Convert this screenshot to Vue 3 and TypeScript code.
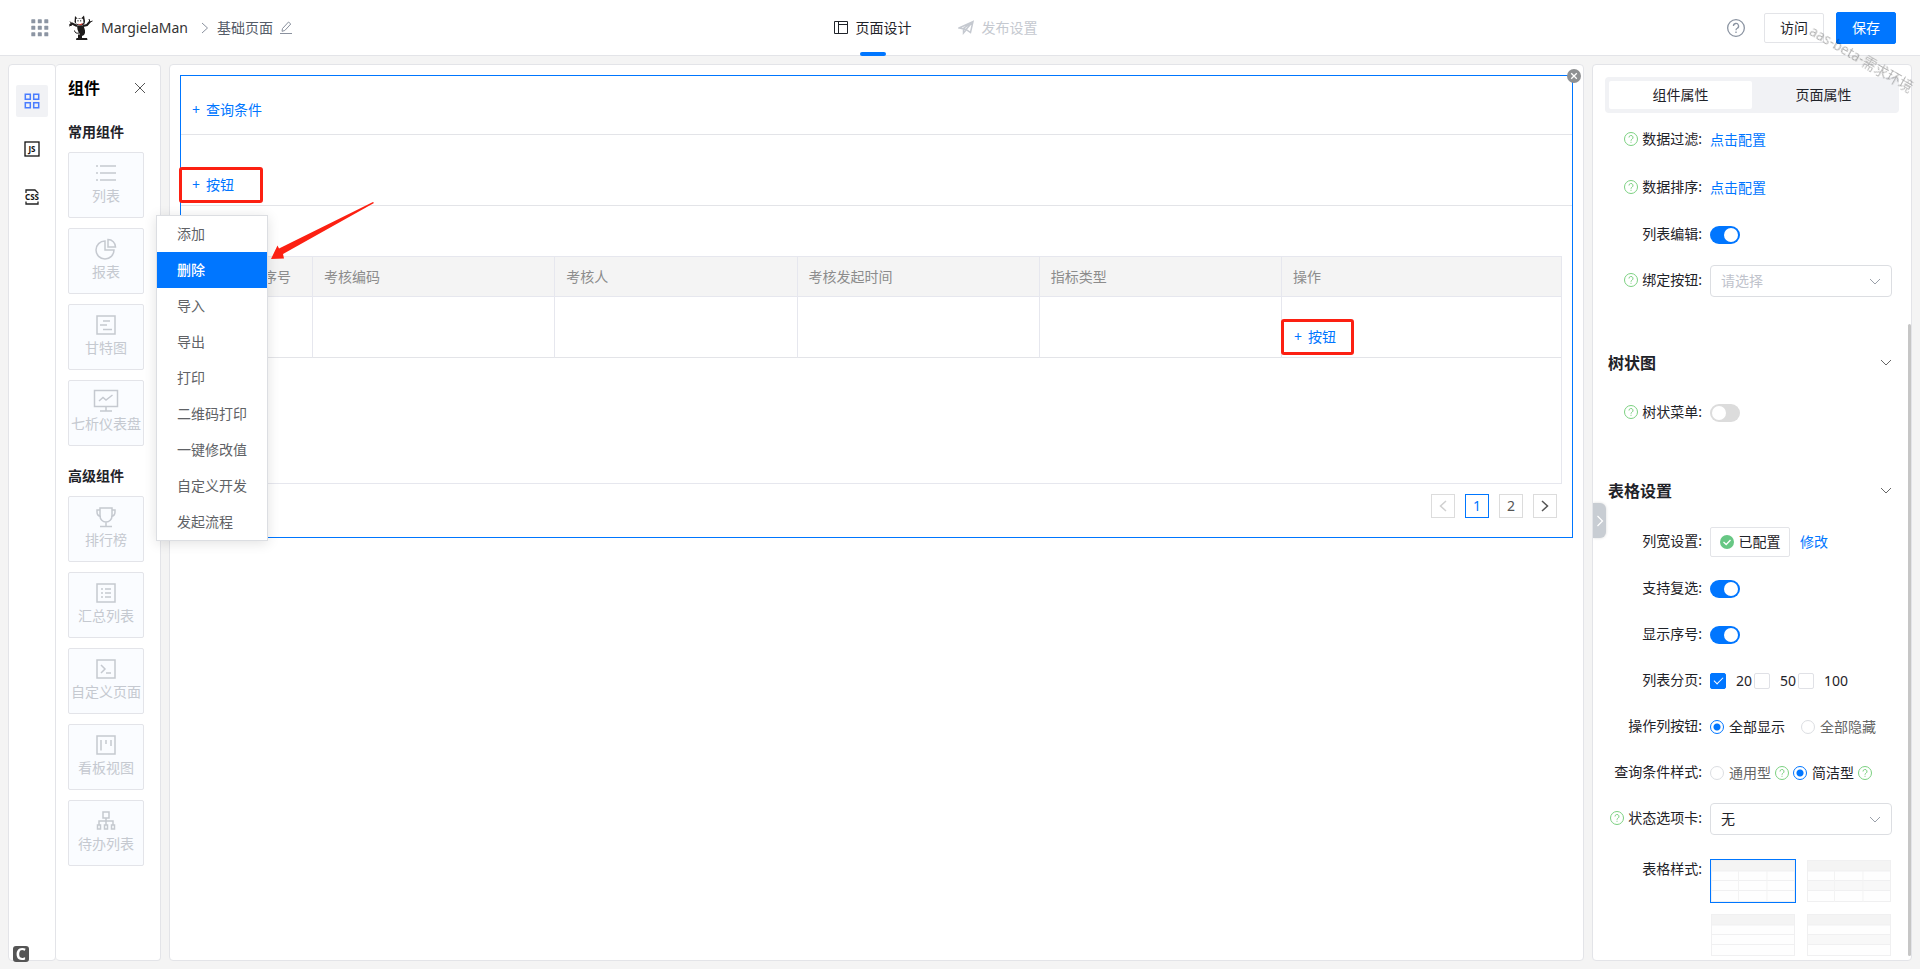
<script setup lang="ts">
import { ref } from 'vue'

interface Tile {
  label: string
  icon: string
}

const frame = 'M4 3h18v18H4z'

const commonTiles: Tile[] = [
  { label: '列表', icon: 'M3 5h2M7 5h16M3 12h2M7 12h16M3 19h2M7 19h16' },
  { label: '报表', icon: 'M12 4a9 9 0 1 0 9 9h-9zM15 2.5a7.5 7.5 0 0 1 7.5 7.5H15z' },
  { label: '甘特图', icon: frame + 'M10 8h7M7 12h7M10 16.5h9' },
  { label: '七析仪表盘', icon: 'M1.5 1.5h23v16h-23zM13 18v4M7 22h12M6 12l4-3.500 3 2.500 6.500-5' },
]

const advancedTiles: Tile[] = [
  { label: '排行榜', icon: 'M7 3h12v8a6 6 0 0 1-12 0zM7 5H4v2q0 4 4 4.500M19 5h3v2q0 4-4 4.500M13 17v4M7 21.500h12' },
  { label: '汇总列表', icon: frame + 'M8 8h2M12 8h6M8 12h2M12 12h6M8 16h2M12 16h6' },
  { label: '自定义页面', icon: frame + 'M8 8l4 4-4 4M13 16h5' },
  { label: '看板视图', icon: frame + 'M8 7v10.500M13 7v4M18 7v6' },
  { label: '待办列表', icon: 'M10 3h6v6h-6zM13 9v7M6 16v-4h14v4M4.500 16h3v4h-3zM11.500 16h3v4h-3zM18.500 16h3v4h-3z' },
]

const groups = [
  { title: '常用组件', tiles: commonTiles },
  { title: '高级组件', tiles: advancedTiles },
]

const menu = ['添加', '删除', '导入', '导出', '打印', '二维码打印', '一键修改值', '自定义开发', '发起流程']
const activeMenu = ref('删除')
const columns = ['考核编码', '考核人', '考核发起时间', '指标类型']

const listEdit = ref(true)
const treeMenu = ref(false)
const multiSelect = ref(true)
const showIndex = ref(true)
const pageSizes = ref<number[]>([20])
const opButtons = ref('show')
const queryStyle = ref('simple')
const boundButton = ref('')
const statusTab = ref('none')
const tableStyle = ref(0)
const thumbs = [
  { grid: true, stripe: false },
  { grid: true, stripe: true },
  { grid: false, stripe: false },
  { grid: false, stripe: true },
]
</script>

<template>
  <div class="app">
    <svg class="defs" aria-hidden="true">
      <symbol id="help" viewBox="0 0 14 14">
        <circle cx="7" cy="7" r="6.500" fill="none" stroke="currentColor" />
        <path d="M5 5.500a2 2 0 1 1 3 1.700q-1 .5-1 1.500M7 9.800v1" fill="none" stroke="currentColor" />
      </symbol>
      <symbol id="down" viewBox="0 0 12 8">
        <path d="M1 1l5 5 5-5" fill="none" stroke="currentColor" />
      </symbol>
    </svg>

    <header class="header">
      <div class="brand">
        <button class="bare apps" aria-label="应用">
          <svg width="18" height="18" viewBox="0 0 18 18" fill="#8c95a3">
            <template v-for="r in 3" :key="r">
              <rect v-for="c in 3" :key="c" :x="(c - 1) * 6.5 + 0.3" :y="(r - 1) * 6.5 + 0.3" width="4" height="4" rx="0.6" />
            </template>
          </svg>
        </button>
        <svg class="mascot" width="24" height="26" viewBox="0 0 24 26">
          <path d="M6 1l2.500 2.500 4-.5L15 .5l1 5.500q0 4-3.500 4.500L8 10 5.500 7z" fill="#1d1b1b" />
          <path d="M7 4q2-1.500 3.200 0 2.300-1.500 4 .5l.3 3.500q-3.500 2.500-7.500.5z" fill="#fff" />
          <path d="M8.500 8.500q3 1.500 5-.5l-.5 2q-2.500 1-4.500-1.500z" fill="#d8392f" />
          <path d="M9 5v1.500M11.700 5v1.500" stroke="#111" stroke-width=".8" />
          <path d="M8 11L3 8.500 1 10M14 11l4-1 3-3.500" fill="none" stroke="#1d1b1b" stroke-width="2" />
          <path d="M1 6.500l2 2.500-2.500.5M20 4l1 3 2.500-1M0 11l3-1" fill="none" stroke="#1d1b1b" />
          <path d="M8 10.500h6.500l1.500 5q.5 3-1 4.500l-2 1v2h5l.5 2H7l.5-2H9v-3.500h2q-2-3-2.500-5z" fill="#1d1b1b" />
          <path d="M10 18q-4 1-4.500-2.500" fill="none" stroke="#1d1b1b" />
        </svg>
        <span class="app-name">MargielaMan</span>
        <svg class="crumb" width="8" height="12" viewBox="0 0 8 12"><path d="M1 1l5.500 5L1 11" fill="none" stroke="#8a919e" /></svg>
        <span class="page-name">基础页面</span>
        <button class="bare edit" aria-label="编辑名称">
          <svg width="14" height="14" viewBox="0 0 14 14" fill="none" stroke="#8a919e"><path d="M3.500 7.500l6-6.500 2.300 2-6 6.500-2.800.8zM1 12.500h12" /></svg>
        </button>
      </div>
      <nav class="tabs">
        <a href="#design" class="tab on">
          <svg width="15" height="15" viewBox="0 0 15 15" fill="none" stroke="currentColor"><path d="M.5 1.500h13v12H.5zM4.500 1.500v12M4.500 4.500h9" /></svg>
          页面设计
        </a>
        <a href="#publish" class="tab">
          <svg width="17" height="15" viewBox="0 0 17 15" fill="none" stroke="currentColor" stroke-width="1.500"><path d="M1 8l14-6.500-2.500 11-4.500-3zM8 9.500L15 1.500 5.500 8.500v4.500l2.500-3" /></svg>
          发布设置
        </a>
      </nav>
      <div class="actions">
        <button class="bare help-top" aria-label="帮助"><svg width="18" height="18"><use href="#help" /></svg></button>
        <button class="btn">访问</button>
        <button class="btn primary">保存</button>
      </div>
    </header>

    <main class="workspace">
      <aside class="side">
        <div class="rail">
          <button class="rail-btn on" aria-label="组件">
            <svg width="16" height="16" viewBox="0 0 16 16" fill="none" stroke="#4a7dff" stroke-width="1.500"><path d="M1.300 1.300h5v5h-5zM9.700 1.300h5v5h-5zM1.300 9.700h5v5h-5zM9.700 9.700h5v5h-5z" /></svg>
          </button>
          <button class="rail-btn" aria-label="脚本">
            <svg width="16" height="16" viewBox="0 0 16 16"><rect x="1" y="1" width="14" height="14" fill="none" stroke="#111" stroke-width="1.300" /><text x="8" y="11" text-anchor="middle" class="glyph">JS</text></svg>
          </button>
          <button class="rail-btn" aria-label="样式">
            <svg width="16" height="16" viewBox="0 0 16 16"><path d="M2 4V1h9l3 3v.5M2 12.500V15h12v-2.500" fill="none" stroke="#222" stroke-width="1.300" /><text x="8" y="11" text-anchor="middle" class="glyph">CSS</text></svg>
          </button>
        </div>
        <section class="palette">
          <div class="palette-head">
            <h2>组件</h2>
            <button class="bare close" aria-label="关闭"><svg width="12" height="12" viewBox="0 0 12 12"><path d="M1 1l10 10M11 1L1 11" stroke="#555" /></svg></button>
          </div>
          <div v-for="g in groups" :key="g.title" class="group">
            <h3>{{ g.title }}</h3>
            <div class="tiles">
              <button v-for="t in g.tiles" :key="t.label" class="tile">
                <svg width="26" height="24" viewBox="0 0 26 24" fill="none" stroke="currentColor" stroke-width="1.500"><path :d="t.icon" /></svg>
                <span>{{ t.label }}</span>
              </button>
            </div>
          </div>
        </section>
      </aside>

      <section class="canvas">
        <div class="block">
          <button class="bare remove" aria-label="移除">
            <svg width="14" height="14" viewBox="0 0 14 14"><circle cx="7" cy="7" r="7" fill="#8f9193" /><path d="M4.200 4.200l5.600 5.600M9.800 4.200L4.200 9.800" stroke="#fff" stroke-width="1.300" /></svg>
          </button>
          <div class="query-bar"><button class="bare add"><i>+</i>查询条件</button></div>
          <div class="button-bar">
            <div class="anchor">
              <button class="bare add"><i>+</i>按钮</button>
              <span class="mark"></span>
              <ul class="menu">
                <li v-for="m in menu" :key="m">
                  <button :class="{ on: m === activeMenu }" @click="activeMenu = m">{{ m }}</button>
                </li>
              </ul>
              <svg class="arrow" width="104" height="60" viewBox="0 0 104 60"><path d="M0 59L6.500 45.500l1.500 3L102 2l1 1L12 54l1 4.500z" fill="#fc2012" /></svg>
            </div>
          </div>
          <div class="table-wrap">
            <table>
              <colgroup>
                <col class="c-check" /><col class="c-index" /><col v-for="c in columns" :key="c" /><col class="c-op" />
              </colgroup>
              <thead>
                <tr><th class="plain"></th><th class="center">序号</th><th v-for="c in columns" :key="c">{{ c }}</th><th>操作</th></tr>
              </thead>
              <tbody>
                <tr>
                  <td class="plain"></td><td></td><td v-for="c in columns" :key="c"></td>
                  <td class="op"><div class="anchor"><button class="bare add"><i>+</i>按钮</button><span class="mark small"></span></div></td>
                </tr>
              </tbody>
            </table>
          </div>
          <nav class="pager">
            <button disabled aria-label="上一页"><svg width="8" height="12" viewBox="0 0 8 12"><path d="M7 1L1.500 6 7 11" fill="none" stroke="#d0d0d0" stroke-width="1.500" /></svg></button>
            <button class="on">1</button>
            <button>2</button>
            <button aria-label="下一页"><svg width="8" height="12" viewBox="0 0 8 12"><path d="M1 1l5.500 5L1 11" fill="none" stroke="#555" stroke-width="1.500" /></svg></button>
          </nav>
        </div>
      </section>

      <aside class="props">
        <button class="collapse" aria-label="收起"><svg width="8" height="12" viewBox="0 0 8 12"><path d="M1.500 1L6.500 6l-5 5" fill="none" stroke="#fff" stroke-width="1.200" /></svg></button>
        <div class="segment">
          <button class="on">组件属性</button>
          <button>页面属性</button>
        </div>
        <form class="form" @submit.prevent>
          <div class="row tall">
            <span class="label"><svg class="tip"><use href="#help" /></svg>数据过滤:</span>
            <a href="#filter">点击配置</a>
          </div>
          <div class="row tall">
            <span class="label"><svg class="tip"><use href="#help" /></svg>数据排序:</span>
            <a href="#sort">点击配置</a>
          </div>
          <div class="row">
            <label class="label" for="list-edit">列表编辑:</label>
            <input id="list-edit" v-model="listEdit" type="checkbox" class="switch" />
          </div>
          <div class="row section-end">
            <label class="label" for="bound"><svg class="tip"><use href="#help" /></svg>绑定按钮:</label>
            <div class="select">
              <select id="bound" v-model="boundButton" class="empty"><option value="">请选择</option></select>
              <svg><use href="#down" /></svg>
            </div>
          </div>

          <div class="heading"><h2>树状图</h2><svg><use href="#down" /></svg></div>
          <div class="row">
            <label class="label" for="tree"><svg class="tip"><use href="#help" /></svg>树状菜单:</label>
            <input id="tree" v-model="treeMenu" type="checkbox" class="switch" />
          </div>

          <div class="heading"><h2>表格设置</h2><svg><use href="#down" /></svg></div>
          <div class="row tall">
            <span class="label">列宽设置:</span>
            <button type="button" class="btn configured">
              <svg width="14" height="14" viewBox="0 0 14 14"><circle cx="7" cy="7" r="7" fill="#67c784" /><path d="M3.500 7l2.700 2.500L10.500 5" fill="none" stroke="#fff" stroke-width="1.300" /></svg>已配置
            </button>
            <a class="modify" href="#width">修改</a>
          </div>
          <div class="row">
            <label class="label" for="multi">支持复选:</label>
            <input id="multi" v-model="multiSelect" type="checkbox" class="switch" />
          </div>
          <div class="row">
            <label class="label" for="index">显示序号:</label>
            <input id="index" v-model="showIndex" type="checkbox" class="switch" />
          </div>
          <div class="row">
            <span class="label">列表分页:</span>
            <div class="checks">
              <label v-for="n in [20, 50, 100]" :key="n"><input v-model="pageSizes" type="checkbox" class="check" :value="n" />{{ n }}</label>
            </div>
          </div>
          <div class="row">
            <span class="label">操作列按钮:</span>
            <div class="radios wide">
              <label :class="{ on: opButtons === 'show' }"><input v-model="opButtons" type="radio" name="op" value="show" />全部显示</label>
              <label :class="{ on: opButtons === 'hide' }"><input v-model="opButtons" type="radio" name="op" value="hide" />全部隐藏</label>
            </div>
          </div>
          <div class="row">
            <span class="label">查询条件样式:</span>
            <div class="radios">
              <label :class="{ on: queryStyle === 'common' }"><input v-model="queryStyle" type="radio" name="query" value="common" />通用型</label>
              <svg class="tip"><use href="#help" /></svg>
              <label :class="{ on: queryStyle === 'simple' }"><input v-model="queryStyle" type="radio" name="query" value="simple" />简洁型</label>
              <svg class="tip"><use href="#help" /></svg>
            </div>
          </div>
          <div class="row">
            <label class="label" for="status"><svg class="tip"><use href="#help" /></svg>状态选项卡:</label>
            <div class="select">
              <select id="status" v-model="statusTab"><option value="none">无</option></select>
              <svg><use href="#down" /></svg>
            </div>
          </div>
          <div class="row top">
            <span class="label">表格样式:</span>
            <div class="thumbs">
              <button v-for="(t, i) in thumbs" :key="i" type="button" class="thumb" :class="{ on: tableStyle === i }" :aria-label="'样式' + (i + 1)" @click="tableStyle = i">
                <svg viewBox="0 0 84 42" preserveAspectRatio="none">
                  <rect width="84" height="42" fill="#fefefe" />
                  <rect width="84" height="11" fill="#f4f4f4" />
                  <rect v-if="t.stripe" y="21" width="84" height="10" fill="#f8f8f8" />
                  <path d="M0 .5h84M0 11h84M0 20.500h84M0 30.500h84M0 41.500h84M.5 0v42M83.500 0v42" stroke="#f0f0f1" fill="none" />
                  <path v-if="t.grid" d="M27.500 11v31M56 11v31" stroke="#f3f3f3" />
                </svg>
              </button>
            </div>
          </div>
        </form>
        <div class="scrollbar"></div>
      </aside>
    </main>

    <div class="badge">C</div>
    <div class="watermark">aas-beta-需求环境</div>
  </div>
</template>

<style>
body {
  background: #f4f4f4;
}
</style>

<style scoped>
* {
  box-sizing: border-box;
}
.app {
  display: flex;
  flex-direction: column;
  height: 100vh;
  overflow: hidden;
  background: #f4f4f4;
  font-family: 'Noto Sans', 'Noto Sans CJK SC', sans-serif;
  font-size: 14px;
  line-height: 20px;
  color: #1f2329;
}
button,
input,
select {
  font: inherit;
  margin: 0;
}
button {
  cursor: pointer;
  white-space: nowrap;
}
svg {
  display: block;
  flex: none;
}
h2,
h3,
ul {
  margin: 0;
  padding: 0;
  list-style: none;
}
a {
  color: #0076ff;
  text-decoration: none;
}
.defs {
  position: absolute;
  width: 0;
  height: 0;
}
.bare {
  display: flex;
  align-items: center;
  padding: 0;
  border: 0;
  background: none;
}
.header {
  display: flex;
  flex: none;
  height: 56px;
  background: #fff;
  border-bottom: 1px solid #e3e4e8;
}
.brand {
  display: flex;
  flex: 1;
  align-items: center;
  padding-left: 31px;
}
.mascot {
  margin: 0 8px 0 20px;
}
.app-name {
  color: #333;
}
.crumb {
  margin: 0 8px 0 13px;
}
.page-name {
  color: #555c68;
}
.edit {
  margin-left: 6px;
}
.tabs {
  display: flex;
  gap: 46px;
  padding-right: 56px;
}
.tab {
  position: relative;
  display: flex;
  align-items: center;
  gap: 7px;
  color: #c5c9d0;
}
.tab.on {
  color: #1f2329;
}
.tab.on::after {
  content: '';
  position: absolute;
  bottom: -1px;
  left: calc(50% - 13px);
  width: 26px;
  height: 4px;
  border-radius: 2px;
  background: #0076ff;
}
.actions {
  display: flex;
  flex: 1;
  align-items: center;
  justify-content: flex-end;
  gap: 12px;
  padding-right: 24px;
}
.help-top {
  margin-right: 7px;
  color: #8a93a1;
}
.btn {
  display: flex;
  align-items: center;
  justify-content: center;
  width: 60px;
  height: 30px;
  padding: 0;
  border: 1px solid #e3e4e8;
  border-radius: 2px;
  background: #fff;
  color: #1f2329;
}
.btn.primary {
  height: 32px;
  border-color: #0076ff;
  background: #0076ff;
  color: #fff;
}
.workspace {
  display: flex;
  flex: 1;
  gap: 8px;
  min-height: 0;
  padding: 8px;
}
.side {
  display: flex;
}
.rail,
.palette,
.canvas,
.props {
  background: #fff;
  border: 1px solid #e3e4e8;
  border-radius: 4px;
}
.rail {
  display: flex;
  flex-direction: column;
  gap: 16px;
  width: 48px;
  padding: 20px 7px;
}
.rail-btn {
  display: grid;
  place-items: center;
  height: 32px;
  padding: 0;
  border: 0;
  border-radius: 2px;
  background: none;
}
.rail-btn.on {
  background: #f1f2f5;
}
.glyph {
  font: bold 8px 'Noto Sans', sans-serif;
  fill: #111;
}
.palette {
  width: 105px;
  border-left: 0;
  padding: 11px 16px 0 12px;
}
.palette-head {
  display: flex;
  align-items: center;
  justify-content: space-between;
  height: 24px;
}
.close {
  margin-right: -2px;
}
h2 {
  font-size: 16px;
  line-height: 24px;
  font-weight: bold;
}
.palette h2 {
  color: #000;
}
h3 {
  font-size: 14px;
  line-height: 20px;
}
.group {
  padding-top: 22px;
}
.group + .group {
  padding-top: 20px;
}
.tiles {
  display: flex;
  flex-direction: column;
  gap: 10px;
  width: 76px;
  padding-top: 10px;
}
.tile {
  display: flex;
  flex-direction: column;
  align-items: center;
  gap: 1px;
  height: 66px;
  padding: 8px 0 0;
  border: 1px solid #e3e4e9;
  border-radius: 2px;
  background: #fafcff;
  color: #c5c9d0;
}
.canvas {
  flex: 1;
  min-width: 0;
  padding: 10px;
}
.block {
  position: relative;
  border: 1px solid #0076ff;
}
.remove {
  position: absolute;
  top: -7px;
  right: -9px;
}
.query-bar {
  padding: 24px 11px 14px;
  border-bottom: 1px solid #e3e4e8;
}
.button-bar {
  padding: 40px 11px 10px;
  border-bottom: 1px solid #e3e4e8;
}
.add {
  color: #0076ff;
}
.add i {
  width: 14px;
  text-align: left;
  font-style: normal;
}
.anchor {
  position: relative;
  width: max-content;
}
.mark {
  position: absolute;
  top: -8px;
  left: -13px;
  width: 84px;
  height: 36px;
  border: 3px solid #fc2012;
  border-radius: 3px;
  pointer-events: none;
}
.mark.small {
  width: 73px;
}
.menu {
  position: absolute;
  z-index: 5;
  top: 40px;
  left: -36px;
  width: 112px;
  border: 1px solid #dcdee2;
  background: #fff;
  box-shadow: 0 2px 12px rgba(0, 0, 0, 0.12);
}
.menu button {
  display: block;
  width: 100%;
  height: 36px;
  padding: 0 0 0 20px;
  border: 0;
  background: none;
  color: #606266;
  text-align: left;
}
.menu button.on {
  background: #0076ff;
  color: #fff;
  font-weight: 500;
}
.arrow {
  position: absolute;
  z-index: 6;
  top: 25px;
  left: 79px;
}
.table-wrap {
  min-height: 228px;
  margin: 50px 10px 0;
  border: 1px solid #e6e7ee;
}
table {
  width: 100%;
  table-layout: fixed;
  border-collapse: separate;
  border-spacing: 0;
}
.c-check {
  width: 50px;
}
.c-index {
  width: 71px;
}
.c-op {
  width: 279px;
}
th {
  height: 40px;
  padding: 0 11px;
  border-right: 1px solid #e6e7ee;
  border-bottom: 1px solid #e6e7ee;
  background: #f4f4f4;
  color: #8c8c8c;
  font-weight: normal;
  text-align: left;
}
th.center {
  text-align: center;
}
td {
  height: 61px;
  padding: 10px 12px 0;
  border-right: 1px solid #e6e7ee;
  border-bottom: 1px solid #e3e4e8;
}
.plain,
th:last-child,
td:last-child {
  border-right: 0;
}
td.op {
  padding-top: 20px;
}
.pager {
  display: flex;
  justify-content: flex-end;
  gap: 10px;
  padding: 10px 15px 19px;
}
.pager button {
  display: grid;
  place-items: center;
  width: 24px;
  height: 24px;
  padding: 0;
  border: 1px solid #dcdcdc;
  background: #fff;
  color: #555;
}
.pager button.on {
  border-color: #0076ff;
  color: #0076ff;
}
.props {
  position: relative;
  width: 320px;
  padding: 12px;
  overflow: hidden;
}
.collapse {
  position: absolute;
  top: 438px;
  left: 0;
  display: grid;
  place-items: center;
  width: 13px;
  height: 35px;
  padding: 0;
  border: 0;
  border-radius: 0 6px 6px 0;
  background: #c8cdd3;
  box-shadow: 0 0 3px rgba(0, 0, 0, 0.15);
}
.segment {
  display: grid;
  grid-template-columns: 1fr 1fr;
  height: 36px;
  padding: 4px;
  border-radius: 4px;
  background: #f1f2f5;
}
.segment button {
  padding: 0;
  border: 0;
  border-radius: 2px;
  background: none;
  color: #1f2329;
}
.segment button.on {
  background: #fff;
}
.form {
  display: flex;
  flex-direction: column;
  gap: 14px;
  padding: 10px 7px 0 3px;
}
.row {
  display: flex;
  flex: none;
  align-items: center;
  min-height: 32px;
}
.row.tall {
  min-height: 34px;
}
.row.section-end {
  margin-bottom: 4px;
}
.row.top {
  align-items: flex-start;
  padding-top: 10px;
}
.label {
  display: flex;
  flex: none;
  align-items: center;
  justify-content: flex-end;
  gap: 4px;
  width: 94px;
  margin-right: 8px;
  padding-bottom: 2px;
}
.tip {
  width: 14px;
  height: 14px;
  color: #7bd080;
}
.switch {
  position: relative;
  width: 30px;
  height: 18px;
  appearance: none;
  border-radius: 9px;
  background: #dcdcdc;
}
.switch::after {
  content: '';
  position: absolute;
  top: 2px;
  left: 2px;
  width: 14px;
  height: 14px;
  border-radius: 50%;
  background: #fff;
}
.switch:checked {
  background: #0076ff;
}
.switch:checked::after {
  left: 14px;
}
.select {
  position: relative;
  flex: 1;
}
.select select {
  width: 100%;
  height: 32px;
  padding: 0 30px 0 10px;
  appearance: none;
  border: 1px solid #dcdee2;
  border-radius: 4px;
  background: #fff;
  color: #1f2329;
}
.select select.empty {
  color: #bfc3cc;
}
.select svg {
  position: absolute;
  top: 13px;
  right: 11px;
  width: 12px;
  height: 8px;
  color: #9aa0aa;
  pointer-events: none;
}
.heading {
  display: flex;
  align-items: center;
  justify-content: space-between;
  padding: 36px 0 8px;
}
.heading svg {
  width: 12px;
  height: 8px;
  color: #666;
}
.configured {
  gap: 5px;
  width: 80px;
}
.modify {
  margin-left: 10px;
}
.checks,
.radios {
  display: flex;
  align-items: center;
}
.checks {
  gap: 2px;
}
.checks label {
  display: flex;
  align-items: center;
  gap: 10px;
}
.check {
  position: relative;
  width: 16px;
  height: 16px;
  appearance: none;
  border: 1px solid #e0e1e6;
  border-radius: 2px;
}
.check:checked {
  border-color: #0076ff;
  background: #0076ff;
}
.check:checked::after {
  content: '';
  position: absolute;
  top: 3px;
  left: 3px;
  width: 8px;
  height: 4px;
  border: solid #fff;
  border-width: 0 0 1px 1px;
  transform: rotate(-45deg);
}
.radios {
  gap: 4px;
}
.radios.wide {
  gap: 16px;
}
.radios label {
  display: flex;
  align-items: center;
  gap: 5px;
  color: #666;
}
.radios label.on {
  color: #1f2329;
}
.radios input {
  width: 14px;
  height: 14px;
  appearance: none;
  border: 1px solid #dcdee2;
  border-radius: 50%;
}
.radios input:checked {
  border-color: #0076ff;
  background: radial-gradient(circle, #0076ff 3px, #fff 4px);
}
.thumbs {
  display: grid;
  flex: 1;
  grid-template-columns: 1fr 1fr;
  gap: 10px;
}
.thumb {
  padding: 0;
  border: 1px solid transparent;
  background: none;
}
.thumb svg {
  width: 100%;
  height: 42px;
}
.thumb.on {
  border-color: #0076ff;
}
.scrollbar {
  position: absolute;
  top: 259px;
  right: 0;
  bottom: 4px;
  width: 3px;
  border-radius: 2px;
  background: #c6c6c6;
}
.badge {
  position: fixed;
  z-index: 8;
  bottom: 7px;
  left: 13px;
  width: 16px;
  height: 16px;
  border-radius: 3px;
  background: #555;
  color: #fff;
  font-size: 16px;
  font-weight: bold;
  line-height: 16px;
  text-align: center;
}
.watermark {
  position: fixed;
  z-index: 9;
  top: 49px;
  right: 0;
  color: rgba(0, 0, 0, 0.3);
  white-space: nowrap;
  transform: rotate(30deg);
  pointer-events: none;
}
</style>
